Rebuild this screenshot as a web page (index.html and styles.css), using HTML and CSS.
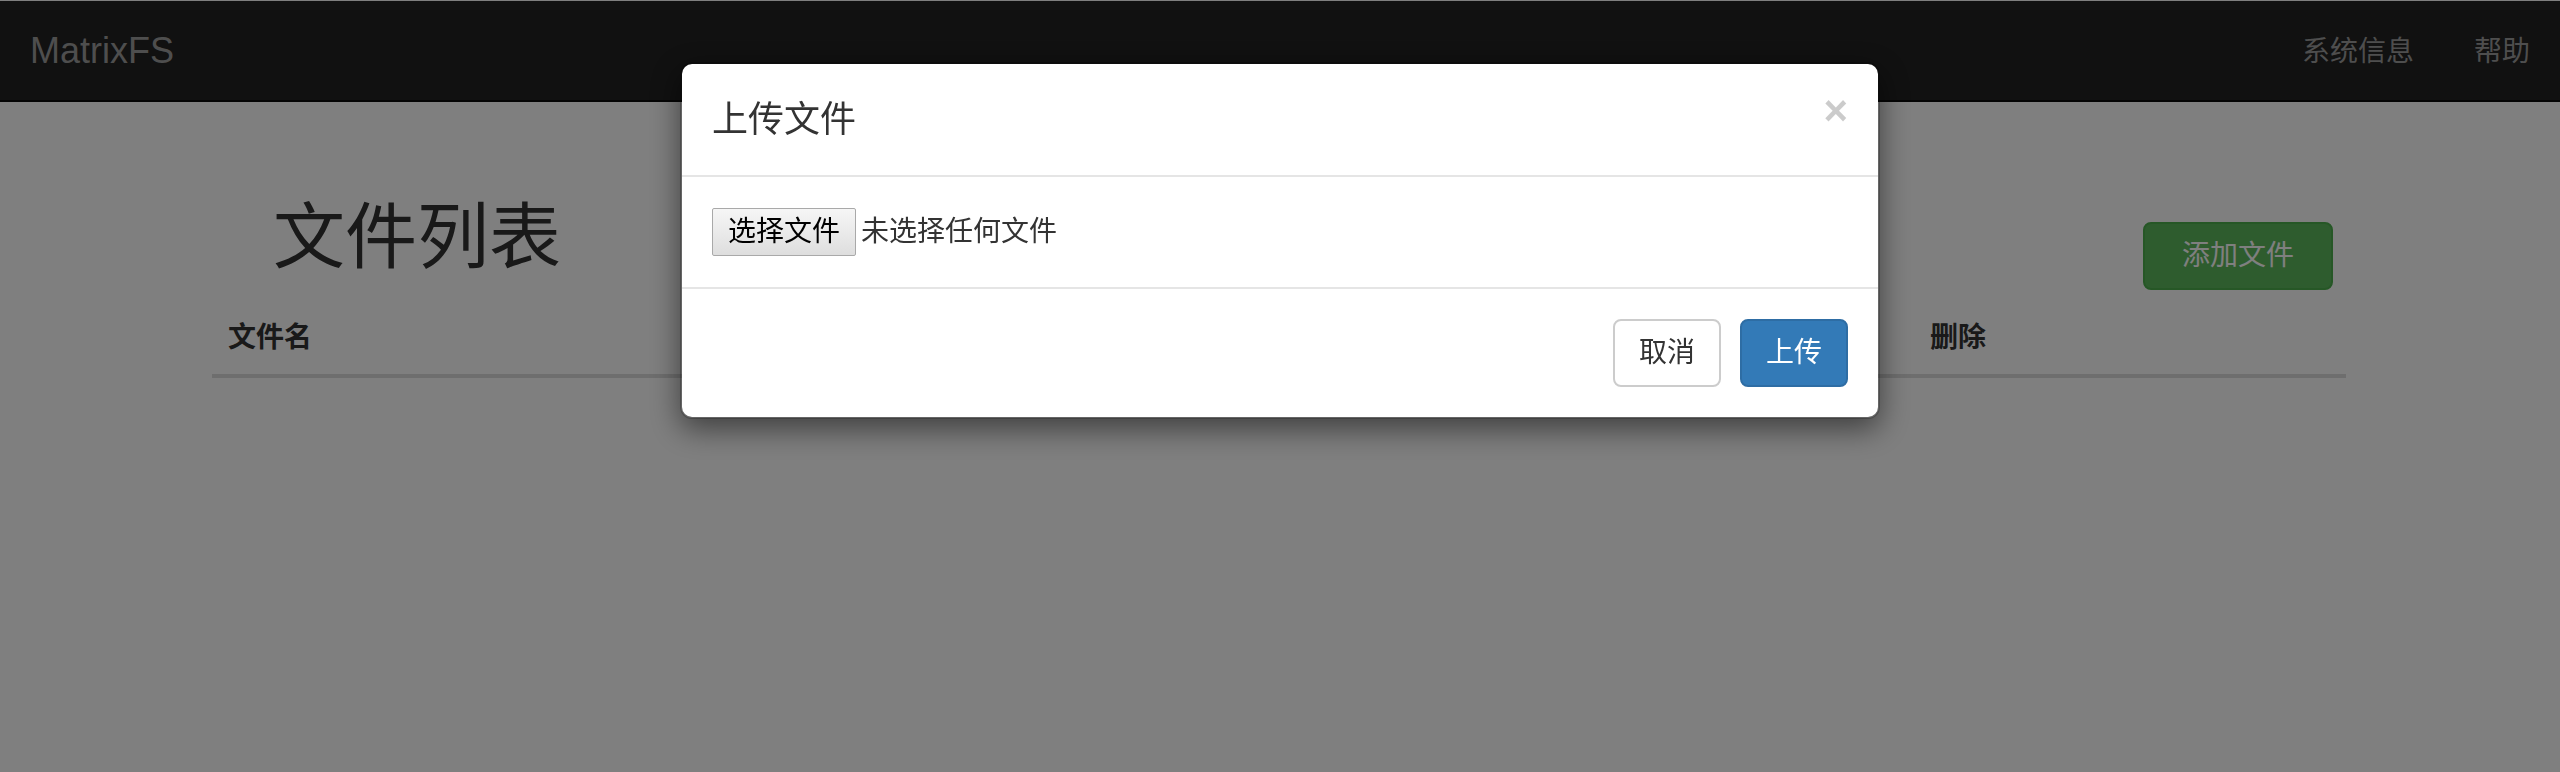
FILE: index.html
```html
<!DOCTYPE html>
<html lang="zh-CN">
<head>
<meta charset="utf-8">
<title>MatrixFS</title>
<link rel="stylesheet" href="styles.css">
</head>
<body>
<nav class="navbar">
  <a class="brand">MatrixFS</a>
  <ul class="nav-right">
    <li><a>系统信息</a></li>
    <li><a>帮助</a></li>
  </ul>
</nav>

<main class="page">
  <div class="page-head">
    <h1 class="title">文件列表</h1>
    <button class="btn btn-success">添加文件</button>
  </div>
  <table class="files">
    <colgroup><col class="col-name"><col class="col-del"></colgroup>
    <thead>
      <tr><th>文件名</th><th>删除</th></tr>
    </thead>
  </table>
</main>

<div class="backdrop"></div>

<div class="modal">
  <div class="modal-dialog">
    <div class="modal-content">
      <div class="modal-header">
        <span class="close">×</span>
        <h4 class="modal-title">上传文件</h4>
      </div>
      <div class="modal-body">
        <div class="file-row">
          <span class="file-btn">选择文件</span>
          <span class="file-name">未选择任何文件</span>
        </div>
      </div>
      <div class="modal-footer">
        <button class="btn btn-default">取消</button>
        <button class="btn btn-primary">上传</button>
      </div>
    </div>
  </div>
</div>
</body>
</html>
```

FILE: styles.css
```css
* { box-sizing: border-box; }

html, body {
  margin: 0;
  padding: 0;
  height: 100%;
}

body {
  background: #fff;
  color: #333;
  font-family: "Liberation Sans", "Noto Sans CJK SC", sans-serif;
  font-size: 28px;
  line-height: 40px;
  overflow: hidden;
}

/* navbar */
.navbar {
  margin-top: 1px;
  height: 101px;
  background: #222;
  border-bottom: 2px solid #080808;
  display: flex;
  align-items: center;
  justify-content: space-between;
}

.brand {
  padding-left: 30px;
  font-size: 36px;
  line-height: 40px;
  color: #9d9d9d;
}

.nav-right {
  list-style: none;
  margin: 0;
  padding: 2px 0 0;
  display: flex;
}

.nav-right a {
  display: block;
  padding: 0 30px;
  font-size: 28px;
  line-height: 40px;
  color: #9d9d9d;
}

/* page */
.page {
  padding: 0 214px 0 212px;
}

.page-head {
  display: flex;
  justify-content: space-between;
  align-items: flex-start;
}

.title {
  margin: 96px 0 0 61px;
  font-size: 72px;
  line-height: 79px;
  font-weight: 400;
  color: #333;
}

.btn {
  display: inline-block;
  font-family: "Liberation Sans", "Noto Sans CJK SC", sans-serif;
  font-size: 28px;
  line-height: 40px;
  padding: 12px 24px;
  border: 2px solid transparent;
  border-radius: 8px;
  font-weight: 400;
  cursor: pointer;
}

.btn-success {
  margin: 120px 13px 0 0;
  padding: 12px 37px;
  background: #5cb85c;
  border-color: #4cae4c;
  color: #fff;
}

.btn-default {
  background: #fff;
  border-color: #ccc;
  color: #333;
}

.btn-primary {
  background: #337ab7;
  border-color: #2e6da4;
  color: #fff;
}

.files {
  width: 100%;
  margin-top: 12px;
  border-collapse: collapse;
  table-layout: fixed;
}

.col-name { width: 1702px; }

.files th {
  text-align: left;
  padding: 16px;
  font-weight: 700;
  font-size: 28px;
  line-height: 40px;
  border-bottom: 4px solid #ddd;
  color: #333;
}

/* overlay */
.backdrop {
  position: fixed;
  inset: 0;
  background: rgba(0, 0, 0, 0.5);
}

.modal {
  position: fixed;
  inset: 0;
}

.modal-dialog {
  width: 1200px;
  margin: 62px auto;
}

.modal-content {
  background: #fff;
  background-clip: padding-box;
  border: 2px solid rgba(0, 0, 0, 0.2);
  border-radius: 12px;
  box-shadow: 0 10px 30px rgba(0, 0, 0, 0.5);
}

.modal-header {
  padding: 30px;
  border-bottom: 2px solid #e5e5e5;
}

.modal-title {
  margin: 0;
  font-size: 36px;
  line-height: 51.43px;
  font-weight: 400;
  color: #333;
}

.close {
  float: right;
  margin-top: -4px;
  font-size: 42px;
  line-height: 1;
  font-weight: 700;
  color: #000;
  opacity: 0.2;
}

.modal-body {
  padding: 30px;
}

.file-row {
  height: 50px;
  display: flex;
  align-items: center;
  font-size: 28px;
}

.file-btn {
  height: 48px;
  line-height: 46px;
  padding: 0 15px;
  border: 1px solid #a9a9a9;
  border-radius: 2px;
  background: linear-gradient(#f6f6f6, #dedede);
  color: #000;
}

.file-name {
  margin-left: 5px;
  color: #333;
}

.modal-footer {
  padding: 30px;
  border-top: 2px solid #e5e5e5;
  display: flex;
  justify-content: flex-end;
  gap: 19px;
}
```
